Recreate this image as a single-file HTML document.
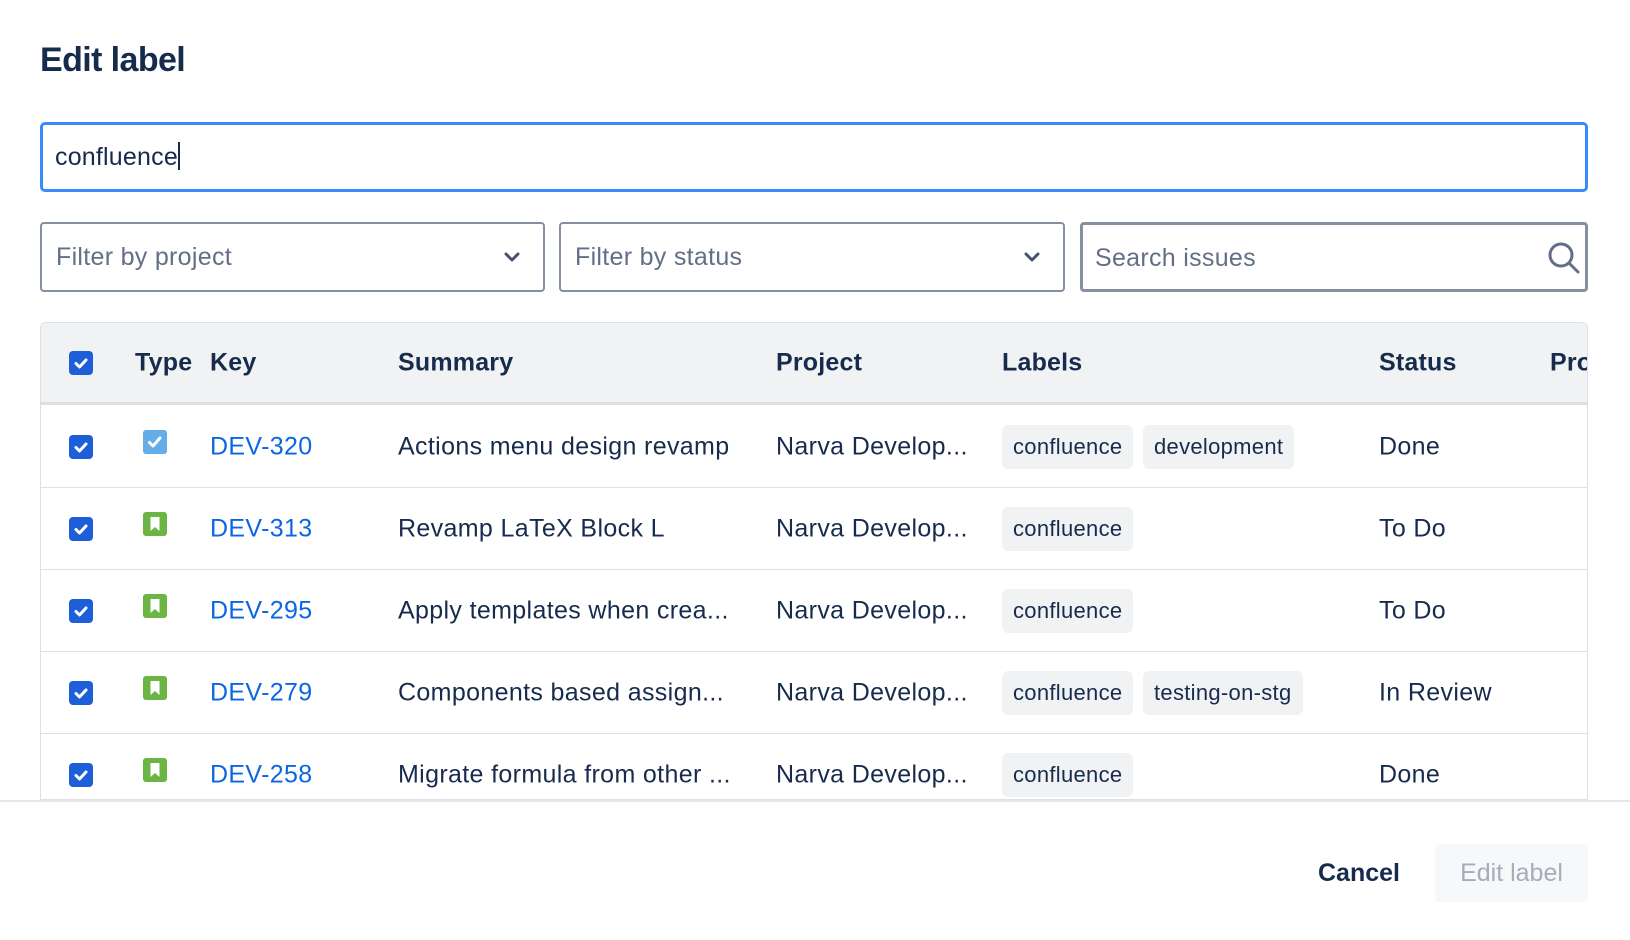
<!DOCTYPE html>
<html><head><meta charset="utf-8"><style>
*{box-sizing:border-box;margin:0;padding:0}
body{width:1630px;height:940px;background:#fff;font-family:"Liberation Sans",Arial,sans-serif;color:#172b4d;position:relative;overflow:hidden}
h1{position:absolute;left:40px;top:41px;font-size:34px;font-weight:bold;color:#172b4d;letter-spacing:-0.6px}
.inp{position:absolute;left:40px;top:122px;width:1548px;height:70px;border:3px solid #388bff;border-radius:5px;font-size:25px;padding-left:12px;line-height:64px;color:#172b4d;letter-spacing:0.2px}
.caret{display:inline-block;width:2px;height:28px;background:#172b4d;vertical-align:middle;margin-top:-4px}
.sel{position:absolute;top:222px;height:70px;border:2px solid #8590a2;border-radius:4px;font-size:25px;color:#626f86;padding-left:14px;line-height:66px;letter-spacing:0.3px}
.sel svg{position:absolute;right:22px;top:24px}
.tbl{position:absolute;left:40px;top:322px;width:1548px;height:478px;border:1px solid #dcdfe4;border-radius:5px 5px 0 0;overflow:hidden}
.hd{position:absolute;left:0;top:0;width:100%;height:82px;background:#f1f2f4;border-bottom:3px solid #dcdfe4}
.row{position:absolute;left:0;width:100%;height:82px;border-bottom:1px solid #dcdfe4}
.c{position:absolute;top:50%;transform:translateY(-50%);font-size:25px;white-space:nowrap;letter-spacing:0.35px}
.hd .c{font-weight:bold;letter-spacing:0.2px}
.cb{position:absolute;left:28px;top:50%;margin-top:-12px;width:24px;height:24px;background:#1d5fd9;border-radius:4px}
.cb svg{position:absolute;left:3px;top:3px}
.ic{position:absolute;left:102px;top:50%;margin-top:-17px;width:24px;height:24px;border-radius:3px}
.key{color:#0c66e4}
.chip{position:absolute;top:50%;margin-top:-22px;height:44px;line-height:44px;background:#f1f2f4;border-radius:6px;padding:0 11px;font-size:22px;color:#172b4d;letter-spacing:0.3px}
.foot{position:absolute;left:0;top:800px;width:1630px;height:140px;border-top:2px solid #e4e6ea;background:#fff}
</style></head><body>
<h1>Edit label</h1>
<div class="inp">confluence<span class="caret"></span></div>
<div class="sel" style="left:40px;width:505px">Filter by project<svg width="18" height="18" viewBox="0 0 18 18"><path d="M3 6l6 6 6-6" stroke="#44546f" stroke-width="3" fill="none" stroke-linecap="round" stroke-linejoin="round"/></svg></div>
<div class="sel" style="left:559px;width:506px">Filter by status<svg width="18" height="18" viewBox="0 0 18 18"><path d="M3 6l6 6 6-6" stroke="#44546f" stroke-width="3" fill="none" stroke-linecap="round" stroke-linejoin="round"/></svg></div>
<div class="sel" style="left:1080px;width:508px;border-width:3px;padding-left:12px">Search issues<svg width="34" height="34" viewBox="0 0 34 34" style="right:4px;top:16px"><circle cx="14" cy="14" r="11" stroke="#626f86" stroke-width="3" fill="none"/><path d="M22 22l9 9" stroke="#626f86" stroke-width="3" stroke-linecap="round"/></svg></div>

<div class="tbl">
<div class="hd">
<div class="cb"><svg width="18" height="18" viewBox="0 0 18 18"><path d="M4 9.5l3.5 3.5L14 6" stroke="#fff" stroke-width="3" fill="none" stroke-linecap="round" stroke-linejoin="round"/></svg></div>
<div class="c" style="left:94px">Type</div><div class="c" style="left:169px">Key</div><div class="c" style="left:357px">Summary</div><div class="c" style="left:735px">Project</div><div class="c" style="left:961px">Labels</div><div class="c" style="left:1338px">Status</div><div class="c" style="left:1509px">Pro</div>
</div>
<div class="row" style="top:83px">
<div class="cb"><svg width="18" height="18" viewBox="0 0 18 18"><path d="M4 9.5l3.5 3.5L14 6" stroke="#fff" stroke-width="3" fill="none" stroke-linecap="round" stroke-linejoin="round"/></svg></div>
<div class="ic" style="background:#65ade8"><svg width="24" height="24" viewBox="0 0 24 24"><path d="M6.5 12.5l3.5 3.5 7-8" stroke="#fff" stroke-width="3" fill="none" stroke-linecap="round" stroke-linejoin="round"/></svg></div>
<div class="c key" style="left:169px">DEV-320</div><div class="c" style="left:357px">Actions menu design revamp</div><div class="c" style="left:735px">Narva Develop...</div>
<div class="chip" style="left:961px">confluence</div><div class="chip" style="left:1102px">development</div>
<div class="c" style="left:1338px">Done</div></div>
<div class="row" style="top:165px">
<div class="cb"><svg width="18" height="18" viewBox="0 0 18 18"><path d="M4 9.5l3.5 3.5L14 6" stroke="#fff" stroke-width="3" fill="none" stroke-linecap="round" stroke-linejoin="round"/></svg></div>
<div class="ic" style="background:#6bb545"><svg width="24" height="24" viewBox="0 0 24 24"><path d="M7.5 5h9v14l-4.5-4-4.5 4z" fill="#fff"/></svg></div>
<div class="c key" style="left:169px">DEV-313</div><div class="c" style="left:357px">Revamp LaTeX Block L</div><div class="c" style="left:735px">Narva Develop...</div>
<div class="chip" style="left:961px">confluence</div>
<div class="c" style="left:1338px">To Do</div></div>
<div class="row" style="top:247px">
<div class="cb"><svg width="18" height="18" viewBox="0 0 18 18"><path d="M4 9.5l3.5 3.5L14 6" stroke="#fff" stroke-width="3" fill="none" stroke-linecap="round" stroke-linejoin="round"/></svg></div>
<div class="ic" style="background:#6bb545"><svg width="24" height="24" viewBox="0 0 24 24"><path d="M7.5 5h9v14l-4.5-4-4.5 4z" fill="#fff"/></svg></div>
<div class="c key" style="left:169px">DEV-295</div><div class="c" style="left:357px">Apply templates when crea...</div><div class="c" style="left:735px">Narva Develop...</div>
<div class="chip" style="left:961px">confluence</div>
<div class="c" style="left:1338px">To Do</div></div>
<div class="row" style="top:329px">
<div class="cb"><svg width="18" height="18" viewBox="0 0 18 18"><path d="M4 9.5l3.5 3.5L14 6" stroke="#fff" stroke-width="3" fill="none" stroke-linecap="round" stroke-linejoin="round"/></svg></div>
<div class="ic" style="background:#6bb545"><svg width="24" height="24" viewBox="0 0 24 24"><path d="M7.5 5h9v14l-4.5-4-4.5 4z" fill="#fff"/></svg></div>
<div class="c key" style="left:169px">DEV-279</div><div class="c" style="left:357px">Components based assign...</div><div class="c" style="left:735px">Narva Develop...</div>
<div class="chip" style="left:961px">confluence</div><div class="chip" style="left:1102px">testing-on-stg</div>
<div class="c" style="left:1338px">In Review</div></div>
<div class="row" style="top:411px">
<div class="cb"><svg width="18" height="18" viewBox="0 0 18 18"><path d="M4 9.5l3.5 3.5L14 6" stroke="#fff" stroke-width="3" fill="none" stroke-linecap="round" stroke-linejoin="round"/></svg></div>
<div class="ic" style="background:#6bb545"><svg width="24" height="24" viewBox="0 0 24 24"><path d="M7.5 5h9v14l-4.5-4-4.5 4z" fill="#fff"/></svg></div>
<div class="c key" style="left:169px">DEV-258</div><div class="c" style="left:357px">Migrate formula from other ...</div><div class="c" style="left:735px">Narva Develop...</div>
<div class="chip" style="left:961px">confluence</div>
<div class="c" style="left:1338px">Done</div></div>
</div>

<div class="foot">
<div style="position:absolute;left:1318px;top:51px;font-size:25px;font-weight:bold;color:#172b4d;line-height:40px">Cancel</div>
<div style="position:absolute;left:1435px;top:42px;width:153px;height:58px;background:#f7f8f9;border-radius:4px;font-size:25px;color:#a5adba;text-align:center;line-height:58px">Edit label</div>
</div>
</body></html>
